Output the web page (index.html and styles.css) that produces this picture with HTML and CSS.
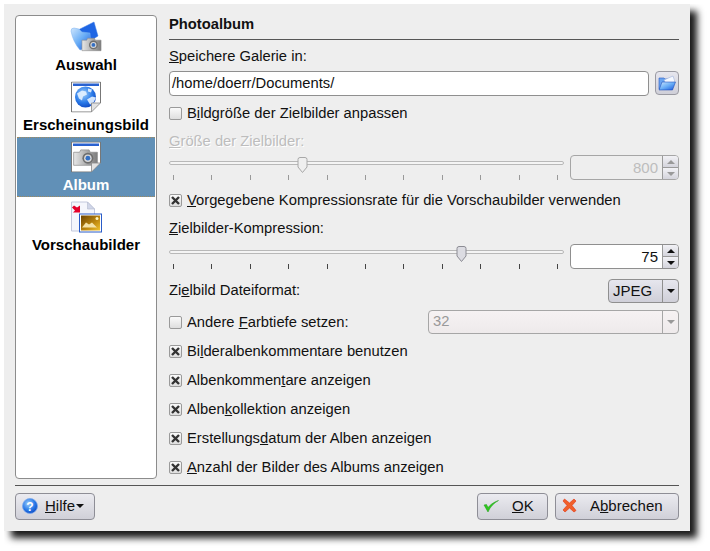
FILE: index.html
```html
<!DOCTYPE html>
<html lang="de">
<head>
  <meta charset="UTF-8" />
  <title>Photoalbum</title>
  <link rel="stylesheet" href="styles.css">
</head>
<body>
  <svg class="defs" width="0" height="0">
    <defs>
      <linearGradient id="blue" x1="0" y1="0" x2="1" y2="1">
        <stop offset="0" stop-color="#cfe6fd" />
        <stop offset="0.5" stop-color="#6aaef6" />
        <stop offset="1" stop-color="#1a56dc" />
      </linearGradient>
      <linearGradient id="cam" x1="0" y1="0" x2="1" y2="0">
        <stop offset="0" stop-color="#e8e8e8" />
        <stop offset="0.6" stop-color="#a6a6a6" />
        <stop offset="1" stop-color="#7c7c7c" />
      </linearGradient>
      <radialGradient id="globe" cx="0.4" cy="0.35" r="0.7">
        <stop offset="0" stop-color="#9fd0fb" />
        <stop offset="0.6" stop-color="#2a7ae8" />
        <stop offset="1" stop-color="#0d46c0" />
      </radialGradient>
      <linearGradient id="gold" x1="0" y1="0" x2="1" y2="1">
        <stop offset="0" stop-color="#6a4200" />
        <stop offset="0.6" stop-color="#c08a10" />
        <stop offset="1" stop-color="#f2c430" />
      </linearGradient>
      <symbol id="camera" viewBox="0 0 22 16">
        <path d="M1 4h5l1-2h7l1 2h6v11H1z" fill="url(#cam)" stroke="#8a8a8a" stroke-width="0.6" />
        <circle cx="13" cy="9" r="4.600" fill="#6e6e6e" />
        <circle cx="13" cy="9" r="3.200" fill="#d8d8d8" />
        <circle cx="13" cy="9" r="2" fill="#3470c4" />
      </symbol>
      <symbol id="page" viewBox="0 0 30 31">
        <path d="M.5.5h29v21l-9 9H.5z" fill="#fff" stroke="#777" />
        <rect x="2" y="2" width="26" height="2.500" fill="#2a62d0" />
      </symbol>
    </defs>
  </svg>

  <div class="window">
    <div class="main">
      <div class="sidebar">
        <div class="nav-item">
          <svg class="nav-icon" width="32" height="32" viewBox="0 0 32 32">
            <path d="M8 9 L24 1 L28 15 L14 24z" fill="#1f66e4" stroke="#3a7ae6" stroke-width="0.5" />
            <path d="M1 10 Q1 7 4 7 L9 8 L12 11 L20 12 L21 26 L10 29 Q3 21 1 10z" fill="url(#blue)" stroke="#7ab0f0" stroke-width="0.5" />
            <use href="#camera" x="11" y="15" width="21" height="16" />
          </svg>
          <span>Auswahl</span>
        </div>
        <div class="nav-item">
          <svg class="nav-icon" width="30" height="31" viewBox="0 0 30 31">
            <use href="#page" width="30" height="31" />
            <circle cx="14.500" cy="15.500" r="10.500" fill="url(#globe)" />
            <path d="M6 12l5-3 4 1 1 3-4 2-1 4-3-2zM16 18l5-3 4 1-3 6-3 1zM17 7l4 1-1 3-3-1z" fill="#e6f2ff" opacity="0.9" />
            <path d="M20.500 30.500v-9h9z" fill="#e2e2e2" stroke="#888" stroke-width="0.8" />
            <path d="M20.500 31l9.500-9.500V31z" fill="#fff" />
          </svg>
          <span>Erscheinungsbild</span>
        </div>
        <div class="nav-item active">
          <svg class="nav-icon" width="30" height="31" viewBox="0 0 30 31">
            <use href="#page" width="30" height="31" />
            <use href="#camera" x="1" y="6" width="27" height="19" />
            <path d="M20.500 30.500v-9h9z" fill="#e2e2e2" stroke="#888" stroke-width="0.8" />
            <path d="M20.500 31l9.500-9.500V31z" fill="#6190b7" />
          </svg>
          <span>Album</span>
        </div>
        <div class="nav-item">
          <svg class="nav-icon" width="32" height="31" viewBox="0 0 32 31">
            <path d="M1.500.5h16l7 7v22h-23z" fill="#f4f6fc" stroke="#c2c8dc" />
            <path d="M17.500.5v7h7z" fill="#d0d6e8" stroke="#b4bace" stroke-width="0.6" />
            <path d="M4 4l3 2 3-2v7H3l2-2-3-3z" fill="#e4002a" />
            <rect x="9.500" y="12.500" width="22" height="18" fill="#fff" stroke="#2a5cc8" />
            <rect x="11" y="14" width="19" height="15" fill="url(#gold)" />
            <path d="M12 26l4-5 3 2 3-2 5 5z" fill="#f4e3a8" />
            <circle cx="27" cy="17" r="1.500" fill="#fff6c0" />
          </svg>
          <span>Vorschaubilder</span>
        </div>
      </div>

      <div class="content">
        <div class="title">Photoalbum</div>
        <div class="row-label-top"><u>S</u>peichere Galerie in:</div>
        <div class="path-row">
          <div class="field path-field">/home/doerr/Documents/</div>
          <div class="browse">
            <svg width="18" height="16" viewBox="0 0 18 16">
              <path d="M1 3h5l1 1h4v10H1z" fill="#6aa4f0" stroke="#2a5cc8" stroke-width="0.6" />
              <path d="M6 5l9-4 2 6-9 2z" fill="#f4f8ff" stroke="#90a8d8" stroke-width="0.5" />
              <path d="M1 15l3-8h13.500l-3 8z" fill="url(#blue)" stroke="#0e3fb0" stroke-width="0.5" />
            </svg>
          </div>
        </div>

        <label class="check-row resize-row">
          <span class="check"></span>
          <span>B<u>i</u>ldgröße der Zielbilder anpassen</span>
        </label>
        <div class="size-label disabled"><u>G</u>röße der Zielbilder:</div>

        <div class="slider-row size-slider disabled">
          <div class="slider">
            <div class="groove"></div>
            <svg class="handle handle-size" width="11" height="16" viewBox="0 0 11 16">
              <path d="M1 2.500Q1 .5 3 .5h5q2 0 2 2V10l-4.500 5.500L1 10z" fill="#efefef" stroke="#a8a8a8" />
            </svg>
            <div class="ticks">
              <i></i><i></i><i></i><i></i><i></i><i></i><i></i><i></i><i></i><i></i><i></i>
            </div>
          </div>
          <div class="spin">
            <div class="spin-value">800</div>
            <div class="spin-buttons">
              <div class="spin-btn"><b class="up"></b></div>
              <div class="spin-btn"><b class="down"></b></div>
            </div>
          </div>
        </div>

        <label class="check-row rate-row">
          <span class="check on"><svg width="9" height="9" viewBox="0 0 9 9"><path d="M1 1l7 7M8 1L1 8" stroke="#333" stroke-width="2.400" /></svg></span>
          <span><u>V</u>orgegebene Kompressionsrate für die Vorschaubilder verwenden</span>
        </label>
        <div class="compress-label"><u>Z</u>ielbilder-Kompression:</div>

        <div class="slider-row compress-slider">
          <div class="slider">
            <div class="groove"></div>
            <svg class="handle handle-compress" width="11" height="16" viewBox="0 0 11 16">
              <path d="M1 2.500Q1 .5 3 .5h5q2 0 2 2V10l-4.500 5.500L1 10z" fill="#dcdce2" stroke="#8c8c94" />
            </svg>
            <div class="ticks">
              <i></i><i></i><i></i><i></i><i></i><i></i><i></i><i></i><i></i><i></i><i></i>
            </div>
          </div>
          <div class="spin">
            <div class="spin-value">75</div>
            <div class="spin-buttons">
              <div class="spin-btn"><b class="up"></b></div>
              <div class="spin-btn"><b class="down"></b></div>
            </div>
          </div>
        </div>

        <div class="format-row">
          <div class="format-label">Zi<u>e</u>lbild Dateiformat:</div>
          <div class="combo jpeg">
            <div class="combo-value">JPEG</div>
            <div class="combo-arrow"><b class="down"></b></div>
          </div>
        </div>

        <div class="depth-row">
          <label class="check-row">
            <span class="check"></span>
            <span>Andere <u>F</u>arbtiefe setzen:</span>
          </label>
          <div class="combo depth disabled">
            <div class="combo-value">32</div>
            <div class="combo-arrow"><b class="down"></b></div>
          </div>
        </div>

        <div class="check-list">
          <label class="check-row">
            <span class="check on"><svg width="9" height="9" viewBox="0 0 9 9"><path d="M1 1l7 7M8 1L1 8" stroke="#333" stroke-width="2.400" /></svg></span>
            <span>Bi<u>l</u>deralbenkommentare benutzen</span>
          </label>
          <label class="check-row">
            <span class="check on"><svg width="9" height="9" viewBox="0 0 9 9"><path d="M1 1l7 7M8 1L1 8" stroke="#333" stroke-width="2.400" /></svg></span>
            <span>Albenkommen<u>t</u>are anzeigen</span>
          </label>
          <label class="check-row">
            <span class="check on"><svg width="9" height="9" viewBox="0 0 9 9"><path d="M1 1l7 7M8 1L1 8" stroke="#333" stroke-width="2.400" /></svg></span>
            <span>Alben<u>k</u>ollektion anzeigen</span>
          </label>
          <label class="check-row">
            <span class="check on"><svg width="9" height="9" viewBox="0 0 9 9"><path d="M1 1l7 7M8 1L1 8" stroke="#333" stroke-width="2.400" /></svg></span>
            <span>Erstellungs<u>d</u>atum der Alben anzeigen</span>
          </label>
          <label class="check-row">
            <span class="check on"><svg width="9" height="9" viewBox="0 0 9 9"><path d="M1 1l7 7M8 1L1 8" stroke="#333" stroke-width="2.400" /></svg></span>
            <span><u>A</u>nzahl der Bilder des Albums anzeigen</span>
          </label>
        </div>
      </div>
    </div>

    <div class="separator"></div>

    <div class="footer">
      <div class="btn help">
        <svg width="16" height="16" viewBox="0 0 16 16">
          <circle cx="8" cy="8" r="7.500" fill="url(#globe)" stroke="#7aa8ec" stroke-width="0.8" />
          <text x="8" y="12.500" class="help-mark">?</text>
        </svg>
        <span><u>H</u>ilfe</span>
        <b class="down"></b>
      </div>
      <div class="footer-right">
        <div class="btn ok">
          <svg width="16" height="14" viewBox="0 0 16 14">
            <path d="M1 6l4 7C7 8 11 4 15.500 1.500 10 3.500 7 6 5 8.500L3.500 5.500z" fill="#2ec81e" stroke="#1a9a12" stroke-width="0.5" />
          </svg>
          <span><u>O</u>K</span>
        </div>
        <div class="btn cancel">
          <svg width="15" height="15" viewBox="0 0 15 15">
            <path d="M2.500 1L7.500 5 12 1l2 2-4 4.500 4 5-2 1.500-4.500-4L3 14 1 12l4-4.500L1 3z" fill="#f0602a" stroke="#e43010" stroke-width="0.6" />
          </svg>
          <span>A<u>b</u>brechen</span>
        </div>
      </div>
    </div>
  </div>
</body>
</html>
```

FILE: styles.css
```css
* {
  box-sizing: border-box;
}
html, body {
  background: #fff;
}
body {
  width: 706px;
  height: 547px;
  margin: 4px 0 0 4px;
  font-family: "Liberation Sans", Arial, sans-serif;
  font-size: 14.75px;
  color: #111;
}
.defs {
  display: block;
  height: 0;
}
u {
  text-underline-offset: 1px;
}

.window {
  width: 686px;
  height: 527px;
  padding: 11px;
  background: #eeeeee;
  box-shadow: 7px 7px 7px rgba(0, 0, 0, 0.9);
}
.main {
  display: flex;
  gap: 12px;
  height: 464px;
}

/* left list */
.sidebar {
  width: 142px;
  padding: 1px;
  background: #fff;
  border: 1px solid #8c8c8c;
  border-radius: 4px;
}
.nav-item {
  display: flex;
  flex-direction: column;
  align-items: center;
  height: 60px;
  padding-top: 4px;
  font-weight: bold;
  font-size: 15px;
  line-height: 18px;
  color: #000;
}
.nav-item span {
  margin-top: 3px;
}
.nav-icon {
  display: block;
  height: 32px;
}
.nav-item.active {
  background: #6190b7;
  border-top: 1px dotted #a08a60;
  border-bottom: 1px dotted #a08a60;
  padding-top: 3px;
  color: #fff;
}

/* right side */
.content {
  flex: 1;
  display: flex;
  flex-direction: column;
}
.title {
  height: 25px;
  font-weight: bold;
  line-height: 18px;
  border-bottom: 1px solid #555;
}
.row-label-top {
  height: 31px;
  line-height: 32px;
}
.path-row {
  display: flex;
  gap: 6px;
  height: 25px;
}
.field {
  background: #fff;
  border: 1px solid #8f8f8f;
  border-radius: 4px;
}
.path-field {
  flex: 1;
  padding-left: 2px;
  line-height: 22px;
}
.browse {
  display: flex;
  align-items: center;
  justify-content: center;
  width: 24px;
  height: 24px;
  background: linear-gradient(#e6e6ee, #cfcfd8);
  border: 1px solid #9a9aa2;
  border-radius: 4px;
}

.check-row {
  display: flex;
  align-items: center;
  gap: 5px;
}
.check {
  display: flex;
  align-items: center;
  justify-content: center;
  flex: none;
  width: 13px;
  height: 13px;
  background: linear-gradient(#fafafa, #dedede);
  border: 1px solid #9a9a9a;
  border-radius: 2px;
}
.resize-row {
  height: 34px;
}
.size-label {
  height: 22px;
  line-height: 22px;
}
.disabled {
  color: #bdbdbd;
}
.size-label.disabled {
  text-shadow: 1px 1px 0 #fff;
}

.slider-row {
  display: flex;
  gap: 6px;
  height: 25px;
}
.size-slider {
  margin-top: 3px;
}
.compress-slider {
  margin-top: 8px;
}
.slider {
  position: relative;
  flex: 1;
  padding-top: 6px;
}
.groove {
  height: 4px;
  background: #f4f4f4;
  border: 1px solid #b8b8b8;
  border-radius: 2px;
}
.handle {
  position: absolute;
  top: 2px;
}
.handle-size {
  left: 128px;
}
.handle-compress {
  left: 287px;
}
.ticks {
  display: flex;
  justify-content: space-between;
  margin-top: 10px;
  padding: 0 6px 0 4px;
}
.ticks i {
  display: block;
  width: 1px;
  height: 5px;
  background: #444;
}
.size-slider .ticks i {
  background: #999;
}

.spin {
  display: flex;
  width: 109px;
  background: #fff;
  border: 1px solid #8f8f8f;
  border-radius: 4px;
  overflow: hidden;
}
.size-slider .spin {
  background: #eeeeee;
  color: #bdbdbd;
  border-color: #a6a6a6;
}
.spin-value {
  flex: 1;
  padding-right: 4px;
  text-align: right;
  font-size: 15px;
  line-height: 23px;
}
.spin-buttons {
  display: flex;
  flex-direction: column;
  width: 16px;
  border-left: 1px solid #9a9a9a;
}
.spin-btn {
  display: flex;
  align-items: center;
  justify-content: center;
  flex: 1;
  background: linear-gradient(#f2f2f6, #d4d4dc);
}
.spin-btn + .spin-btn {
  border-top: 1px solid #9a9a9a;
}
.up, .down {
  display: block;
  width: 0;
  height: 0;
  border-left: 4px solid transparent;
  border-right: 4px solid transparent;
}
.up {
  border-bottom: 4px solid #111;
}
.down {
  border-top: 4px solid #111;
}
.size-slider .up {
  border-bottom-color: #999;
}
.size-slider .down, .depth .down {
  border-top-color: #999;
}

.format-row {
  display: flex;
  align-items: center;
  justify-content: space-between;
  height: 24px;
  margin-top: 10px;
}
.format-label {
  padding-bottom: 2px;
}
.combo {
  display: flex;
  height: 24px;
  border: 1px solid #8f8f8f;
  border-radius: 4px;
  overflow: hidden;
}
.combo-value {
  flex: 1;
  line-height: 21px;
}
.combo-arrow {
  display: flex;
  align-items: center;
  justify-content: center;
  width: 16px;
  border-left: 1px solid #8f8f8f;
}
.jpeg {
  width: 71px;
  background: linear-gradient(#e6e6ee, #cfcfd8);
}
.jpeg .combo-value {
  padding-right: 6px;
  text-align: center;
  font-size: 15px;
}
.depth-row {
  display: flex;
  align-items: center;
  justify-content: space-between;
  height: 24px;
  margin-top: 7px;
}
.depth {
  width: 251px;
  background: linear-gradient(#f6f2f3, #eeeaeb);
  border-color: #a6a6a6;
  color: #999;
}
.depth .combo-value {
  padding-left: 4px;
}
.depth .combo-arrow {
  border-left-color: #a6a6a6;
}
.check-list {
  display: flex;
  flex-direction: column;
  gap: 7px;
  margin-top: 6px;
}
.check-list .check-row {
  height: 22px;
}
.rate-row {
  height: 40px;
}
.compress-label {
  height: 16px;
  line-height: 16px;
}

/* bottom buttons */
.separator {
  height: 1px;
  margin-top: 6px;
  background: #555;
}
.footer {
  display: flex;
  justify-content: space-between;
  margin-top: 7px;
}
.footer-right {
  display: flex;
  gap: 7px;
}
.btn {
  display: flex;
  align-items: center;
  height: 27px;
  padding-bottom: 2px;
  font-size: 15px;
  background: linear-gradient(#ebebf0, #d0d0d8);
  border: 1px solid #8e8e96;
  border-radius: 4px;
}
.help {
  width: 80px;
  padding-left: 6px;
  gap: 7px;
}
.help .down {
  margin-left: -6px;
}
.help-mark {
  font-size: 12px;
  font-weight: bold;
  fill: #fff;
  text-anchor: middle;
}
.ok {
  width: 71px;
  padding-left: 5px;
  gap: 13px;
}
.cancel {
  width: 124px;
  padding-left: 6px;
  gap: 13px;
}
```
